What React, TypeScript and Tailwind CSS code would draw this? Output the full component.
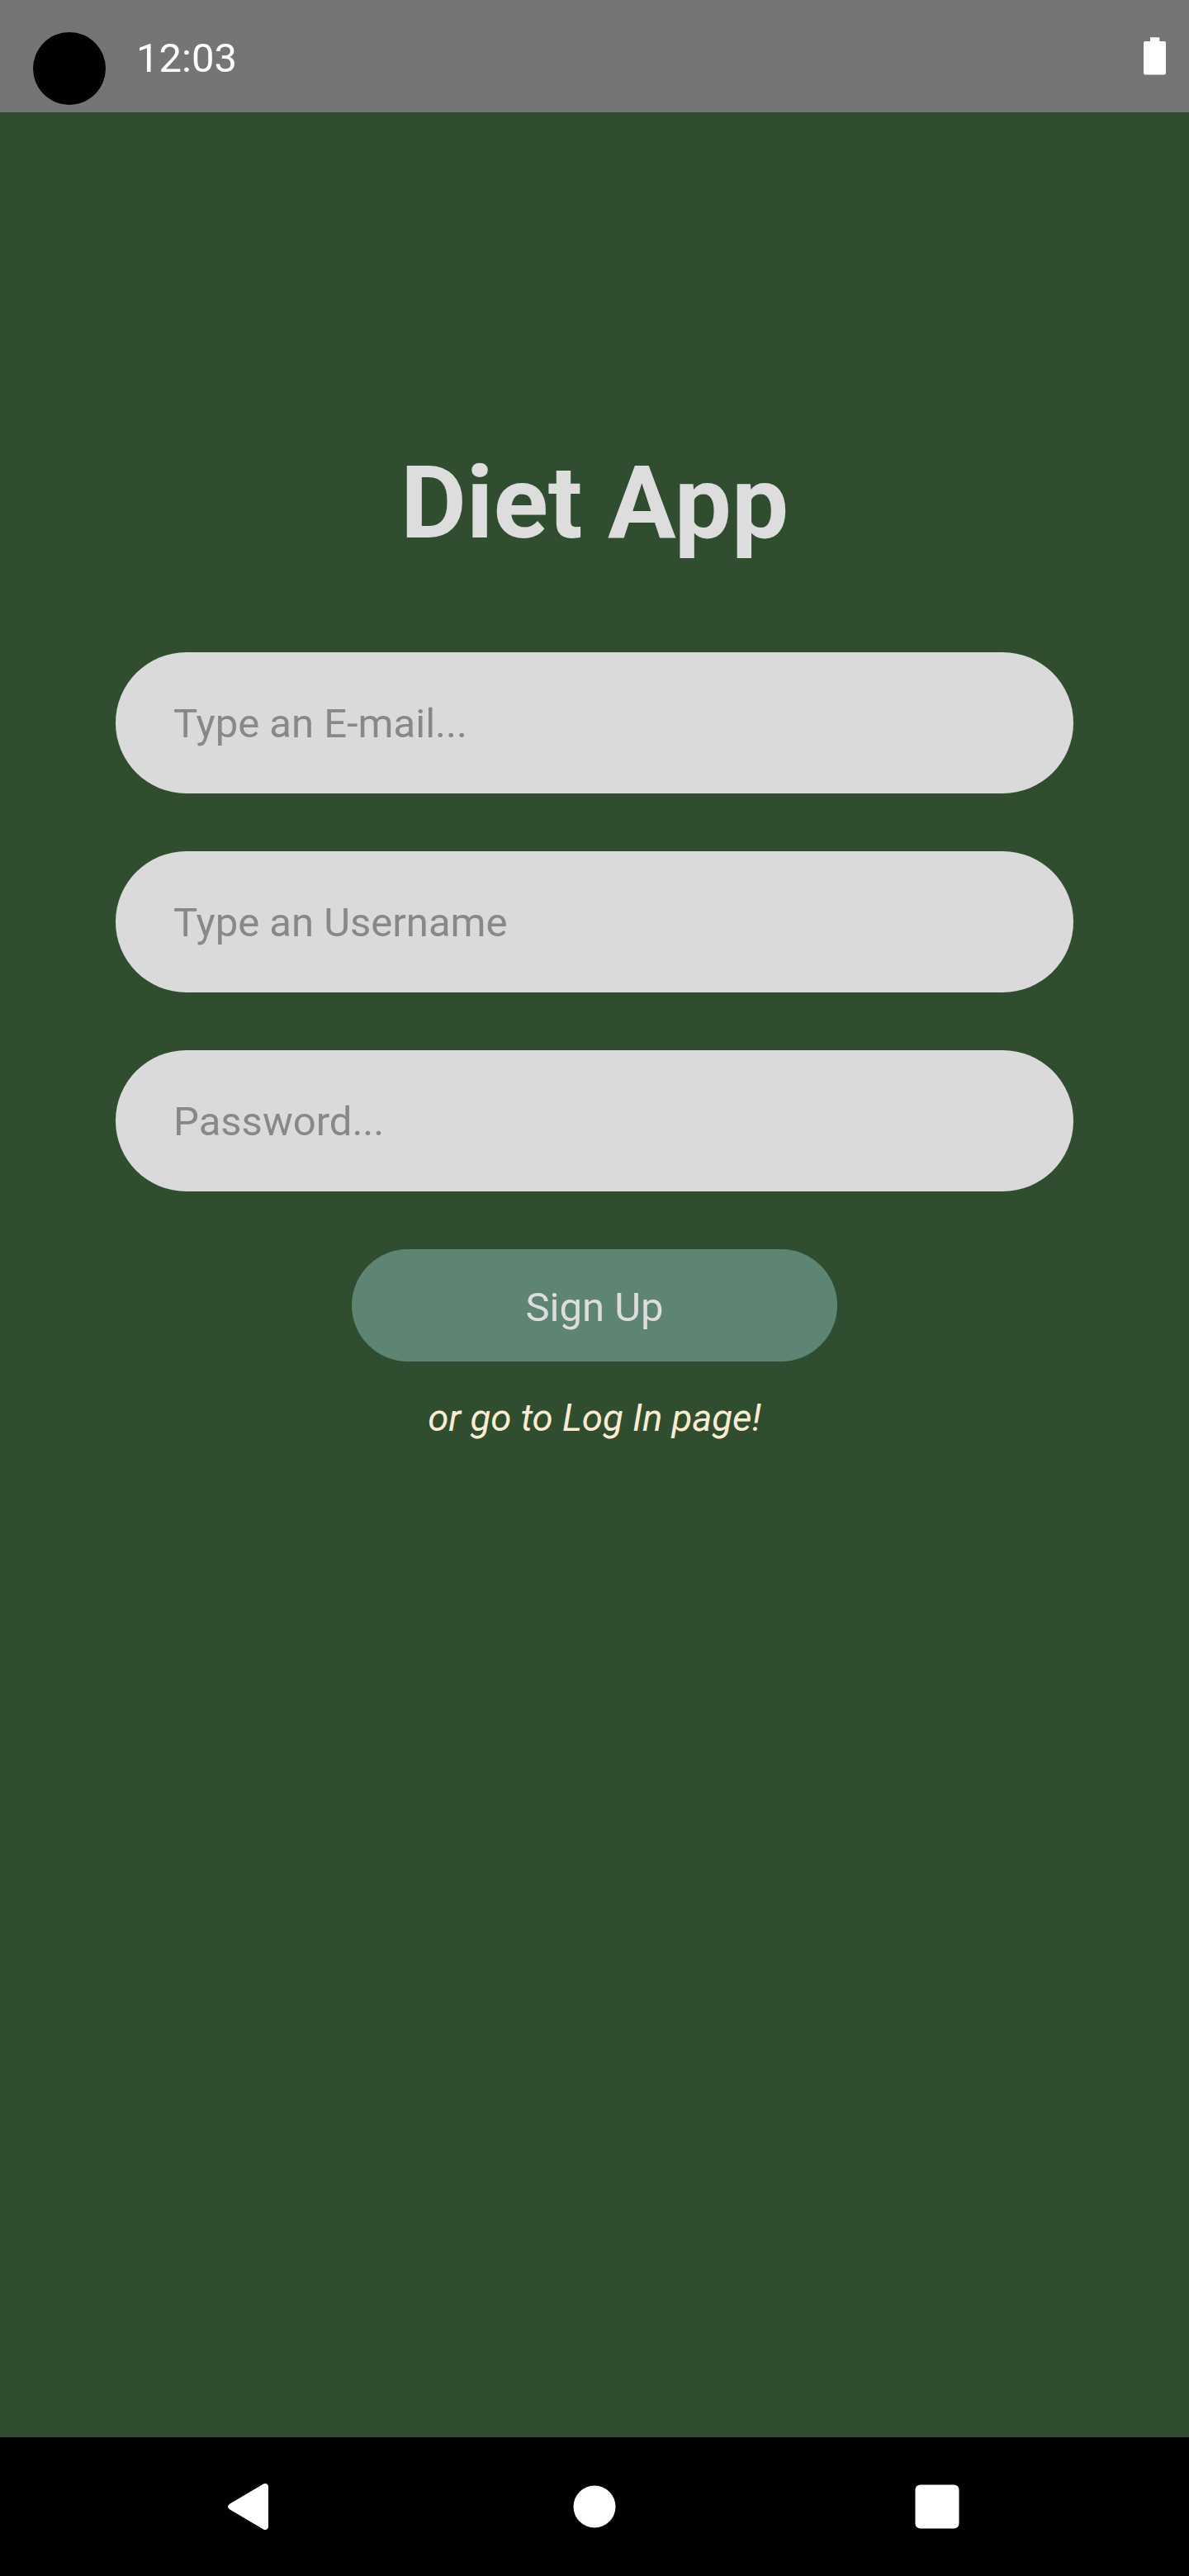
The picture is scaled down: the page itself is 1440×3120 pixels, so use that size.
const fields = [
  { type: 'email', label: 'Type an E-mail...' },
  { type: 'text', label: 'Type an Username' },
  { type: 'password', label: 'Password...' },
];

function StatusBar() {
  return (
    <header className="flex h-[136px] shrink-0 items-start bg-[#757575] text-white">
      <div className="ml-10 mt-[39px] size-[88px] rounded-full bg-black" />
      <span className="ml-[37px] mt-[42px] text-[49px] leading-[58px]">12:03</span>
      <svg className="ml-auto mr-[28px] mt-[45px] h-[46px] w-[27px]" viewBox="0 0 27 46" fill="currentColor">
        <path d="M8 .3h11.3V5H25a2 2 0 0 1 2 2v36.5a2 2 0 0 1-2 2H2a2 2 0 0 1-2-2V7a2 2 0 0 1 2-2h6z" />
      </svg>
    </header>
  );
}

function NavigationBar() {
  return (
    <nav className="flex h-[168px] shrink-0 bg-black text-white">
      <svg className="h-full w-full" viewBox="0 0 1440 168" fill="currentColor">
        <path d="M278 80.700 319 56.600Q322 55 324 57.200Q325 58.200 325 60V108Q325 109.800 324 110.800Q322 113 319 111.400L278 87.300Q274 84 278 80.700Z" />
        <circle cx="720" cy="84" r="25.500" />
        <rect x="1108.500" y="57.500" width="53" height="53" rx="6" />
      </svg>
    </nav>
  );
}

export default function App() {
  return (
    <div className="flex h-[3120px] w-[1440px] flex-col bg-[#304d30] font-['Roboto',sans-serif]">
      <StatusBar />
      <main className="flex flex-1 flex-col items-center">
        <h1 className="mt-[401px] text-[123px] font-bold leading-[144px] text-[#dddddd]">Diet App</h1>
        <form className="mt-[109px] flex w-[1160px] flex-col items-center gap-[70px]">
          {fields.map((field) => (
            <input
              key={field.label}
              type={field.type}
              placeholder={field.label}
              className="h-[171px] w-full rounded-full bg-[#dadada] px-[70px] pt-[2px] text-[49px] placeholder:text-[#888888]"
            />
          ))}
          <button
            type="button"
            className="h-[136px] w-[588px] rounded-full bg-[#5e8474] pt-[5px] text-[49px] leading-[58px] text-[#dddddd]"
          >
            Sign Up
          </button>
        </form>
        <a className="mt-[40px] text-[45.5px] italic leading-[58px] text-[#faecd1]">or go to Log In page!</a>
      </main>
      <NavigationBar />
    </div>
  );
}
